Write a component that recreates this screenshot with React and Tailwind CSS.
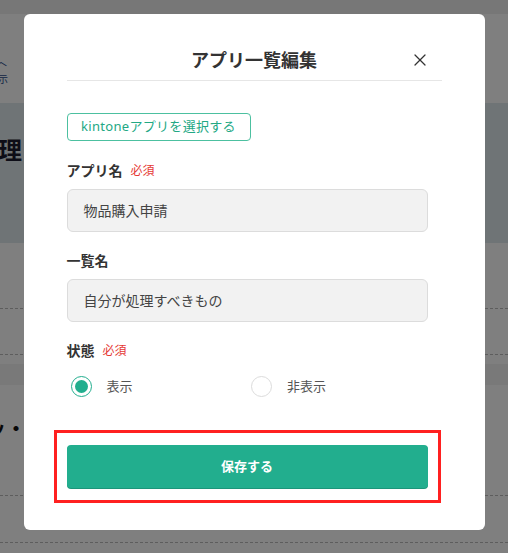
import React from "react";
import { X } from "lucide-react";

const font = { fontFamily: '"Noto Sans", "Noto Sans CJK JP", sans-serif' };

const Required = () => (
  <span className="ml-[8px] text-[12px] font-normal text-[#e53935]">必須</span>
);

const Radio = ({ checked, label }) => (
  <label className="flex items-center gap-[15px] pl-[4px]">
    <span
      className={
        checked
          ? "flex h-[21px] w-[21px] items-center justify-center rounded-full border-[1.5px] border-[#22ae8e]"
          : "h-[21px] w-[21px] rounded-full border border-[#dcdcdc]"
      }
    >
      {checked && <span className="h-[13px] w-[13px] rounded-full bg-[#22ae8e]" />}
    </span>
    <span className="text-[13px] text-[#555]">{label}</span>
  </label>
);

export default function App() {
  return (
    <div className="relative h-[553px] w-[508px] overflow-hidden bg-white" style={font}>
      {/* page behind the dialog */}
      <div className="flex h-full flex-col">
        <div className="h-[14px] bg-[#eeeeee]" />
        <div className="flex h-[89px] flex-col items-start pt-[42px] text-[#2b4a8a]">
          <span className="-ml-[5px] text-[12px] leading-none">︿</span>
          <span className="-ml-[12px] mt-[6px] text-[10px] leading-none">表示</span>
        </div>
        <div className="flex h-[140px] items-start bg-[#dfe8ec] pt-[31px]">
          <span className="-ml-[26px] text-[24px] font-bold leading-[32px] text-[#1a1a2e]">管理</span>
        </div>
        <div className="h-[65px]" />
        <div className="border-t border-dashed border-[#bbbbbb]" />
        <div className="h-[45px]" />
        <div className="border-t border-dashed border-[#bbbbbb]" />
        <div className="h-[9px]" />
        <div className="h-[21px] bg-[#f3f3f3]" />
        <div className="flex h-[110px] items-start pt-[32px]">
          <span className="-ml-[14px] text-[20px] font-bold leading-[24px] text-[#111]">ッ・</span>
        </div>
        <div className="border-t border-dashed border-[#bbbbbb]" />
        <div className="h-[46px]" />
        <div className="border-t border-dashed border-[#bbbbbb]" />
      </div>

      {/* overlay */}
      <div className="absolute inset-0 flex justify-center bg-black/50 pt-[14px]">
        <div className="flex h-[516px] w-[461px] flex-col rounded-[6px] bg-white">
          <div className="px-[43px]">
            <div className="grid grid-cols-[1fr_auto_1fr] items-center border-b border-[#e6e6e6] pb-[8px] pt-[34px]">
              <div />
              <h2 className="text-[18px] font-semibold leading-[24px] text-[#333]">アプリ一覧編集</h2>
              <div className="flex justify-end pr-[12px]">
                <X size={20} strokeWidth={1.5} className="text-[#333]" />
              </div>
            </div>
          </div>

          <div className="flex flex-col pl-[43px] pr-[57px] pt-[32px]">
            <button className="h-[28px] w-[184px] rounded-[4px] border border-[#4cc0a0] text-[13px] font-normal tracking-[0.3px] text-[#22a884]">
              kintoneアプリを選択する
            </button>

            <div className="mt-[20px] flex items-center text-[14px] font-bold leading-[20px] text-[#333]">
              アプリ名
              <Required />
            </div>
            <div className="mt-[8px] flex h-[43px] items-center rounded-[6px] border border-[#dcdcdc] bg-[#f2f2f2] pl-[16px] text-[14px] text-[#444]">
              物品購入申請
            </div>

            <div className="mt-[19px] flex items-center text-[14px] font-bold leading-[20px] text-[#333]">
              一覧名
            </div>
            <div className="mt-[8px] flex h-[43px] items-center rounded-[6px] border border-[#dcdcdc] bg-[#f2f2f2] pl-[16px] text-[14px] text-[#444]">
              自分が処理すべきもの
            </div>

            <div className="mt-[19px] flex items-center text-[14px] font-bold leading-[20px] text-[#333]">
              状態
              <Required />
            </div>
            <div className="mt-[15px] grid grid-cols-2">
              <Radio checked label="表示" />
              <Radio label="非表示" />
            </div>

            <div className="-mx-[13px] mt-[33px] border-[3px] border-[#ff2020] px-[10px] py-[12px]">
              <button className="flex h-[43px] w-full items-center justify-center rounded-[4px] bg-[#22ae8e] text-[13px] font-bold text-white shadow-[0_1px_0_#1c957a]">
                保存する
              </button>
            </div>
          </div>
        </div>
      </div>
    </div>
  );
}
